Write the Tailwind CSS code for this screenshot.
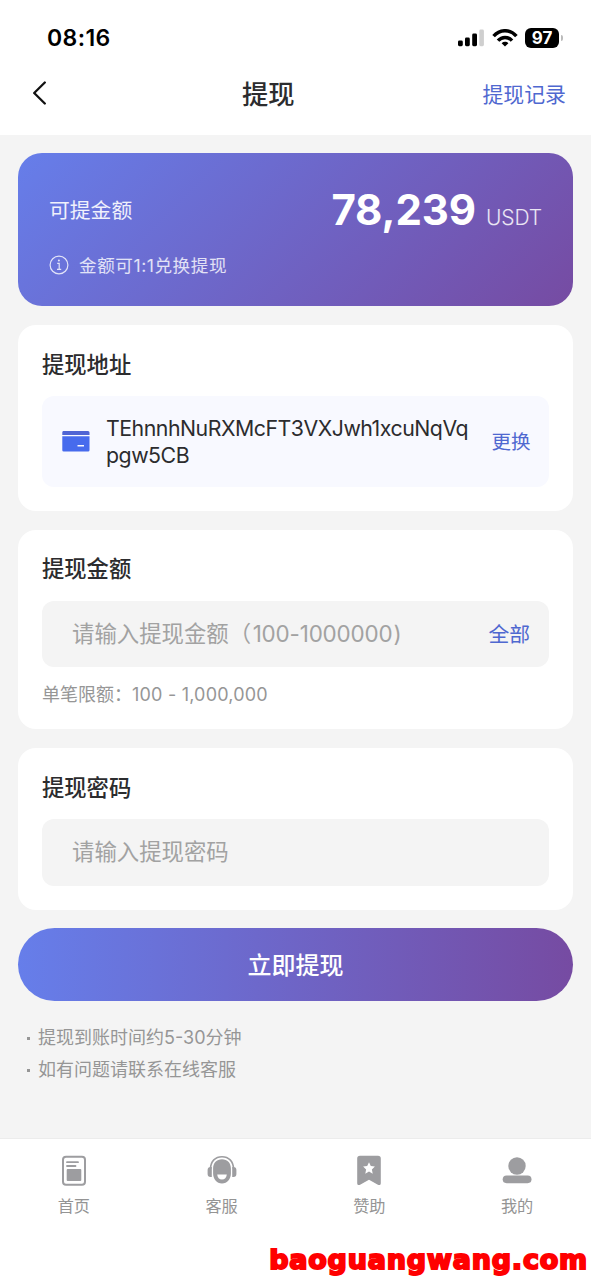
<!DOCTYPE html>
<html lang="zh-CN">
<head>
<meta charset="utf-8">
<meta name="viewport" content="width=device-width, initial-scale=1">
<title>提现</title>
<script src="https://cdn.jsdelivr.net/npm/@tailwindcss/browser@4"></script>
</head>
<body class="relative flex h-[1280px] w-[591px] flex-col overflow-hidden bg-[#f4f4f4] font-['Inter','Noto_Sans_CJK_SC',sans-serif] text-[#2c2c2e] whitespace-nowrap">

<header class="h-[135px] shrink-0 bg-white">
  <div class="flex h-[53px] items-center justify-between pt-[22px] pr-[28px] pl-[47px] text-black">
    <span class="text-[23px] leading-[30px] font-semibold tracking-[0.4px]">08:16</span>
    <div class="flex items-center">
      <svg class="h-[18px] w-[26px]" viewBox="0 0 26 18">
        <rect x="0" y="11.5" width="4.8" height="5.7" rx="1.4"/>
        <rect x="7" y="8.5" width="4.8" height="8.7" rx="1.4"/>
        <rect x="14.2" y="4.5" width="4.8" height="12.7" rx="1.4"/>
        <rect x="21.3" y="0.6" width="4.6" height="16.6" rx="1.4" fill="#cfcfcf"/>
      </svg>
      <svg class="ml-[8px] h-[18px] w-[26px]" viewBox="0 0 26 18" fill="none" stroke="#000" stroke-width="3.5">
        <path d="M1.6 7.2C8-.1 18-.1 24.4 7.2"/>
        <path d="M6 11.6c4-4.3 10-4.3 14 0"/>
        <path d="M9.6 14.2c2-1.9 4.800-1.900 6.800 0L13 17.600z" fill="#000" stroke="none"/>
      </svg>
      <div class="ml-[7px] flex h-[20px] w-[34px] items-center justify-center rounded-[6px] bg-black text-[17px] leading-[20px] font-bold text-white">97</div>
      <div class="ml-[2px] h-[6px] w-[2px] rounded-r-full bg-[#bbb]"></div>
    </div>
  </div>
  <div class="flex h-[82px] items-center justify-between pr-[25px] pl-[32px]">
    <svg class="mt-[-2px] h-[24px] w-[16px]" viewBox="0 0 16 24" fill="none" stroke="#111" stroke-width="2.300" stroke-linecap="round" stroke-linejoin="round"><path d="M12.800 1.500 2.200 12l10.600 10.500"/></svg>
    <h1 class="ml-[6px] pt-[2px] text-[26.300px] leading-[36px] font-medium">提现</h1>
    <a class="pt-[1px] text-[20.900px] leading-[30px] text-[#4f68d0]">提现记录</a>
  </div>
</header>

<main class="flex flex-col px-[18px] pt-[18px]">
  <section class="h-[153px] rounded-[24px] bg-[linear-gradient(135deg,#667eea_0%,#764ba2_100%)] px-[31px] pt-[37px] text-white">
    <div class="flex h-[41px] items-center justify-between">
      <span class="text-[20.800px] text-white/90">可提金额</span>
      <div class="flex items-baseline pt-[2px]">
        <span class="text-[42px] leading-[41px] font-bold tracking-[-0.1px]">78,239</span>
        <span class="ml-[10px] text-[21px] font-light tracking-[-0.1px] text-white/85">USDT</span>
      </div>
    </div>
    <div class="mt-[21px] flex h-[26px] items-center text-[17.600px] text-white/80">
      <svg class="mr-[10px] h-[20px] w-[20px]" viewBox="0 0 20 20" fill="none" stroke="currentColor" stroke-width="1.200"><circle cx="10" cy="10" r="8.900"/><path d="M8.200 8.300H10.200V14M8 14.300h4.200"/><circle cx="9.900" cy="5.600" r="1" fill="currentColor" stroke="none"/></svg>
      <span class="pt-[2px] tracking-[0.550px]">金额可1:1兑换提现</span>
    </div>
  </section>

  <section class="mt-[19px] h-[186px] rounded-[18px] bg-white px-[24px] pt-[25px]">
    <h2 class="text-[22.300px] leading-[30px] font-medium">提现地址</h2>
    <div class="mt-[16px] mr-[0.500px] flex h-[91px] items-center rounded-[12px] bg-[#f8f9ff] pr-[18px] pl-[20px]">
      <svg class="h-[21px] w-[28px] shrink-0" viewBox="0 0 28 21"><path fill="#4f64d4" d="M2 0h24a1.500 1.500 0 0 1 1.500 1.500V4H.3V1.500A1.500 1.500 0 0 1 2 0z"/><path fill="#476bed" fill-rule="evenodd" d="M.3 5.300h27.200v13.900a1.400 1.400 0 0 1-1.400 1.400H1.700A1.400 1.400 0 0 1 .3 19.200zM15.500 14v1.500h6.500V14z"/></svg>
      <p class="ml-[16px] flex-1 pt-px text-[21.300px] leading-[27.500px] tracking-[-0.480px]">TEhnnhNuRXMcFT3VXJwh1xcuNqVq<br>pgw5CB</p>
      <a class="pt-[2px] text-[19.500px] text-[#4f68d0]">更换</a>
    </div>
  </section>

  <section class="mt-[18.500px] h-[199.500px] rounded-[18px] bg-white px-[24px] pt-[24.500px]">
    <h2 class="text-[22.300px] leading-[30px] font-medium">提现金额</h2>
    <div class="mt-[16.500px] mr-[0.500px] flex h-[66px] items-center justify-between rounded-[12px] bg-[#f4f4f4] pr-[18px] pl-[30px]">
      <span class="text-[22.400px] text-[#a2a2a2]">请输入提现金额（<span class="ml-[1.500px] tracking-[-0.150px]">100-1000000</span><span class="ml-px">)</span></span>
      <a class="mr-[0.500px] pt-[2px] text-[20.800px] text-[#4f68d0]">全部</a>
    </div>
    <p class="mt-[14px] text-[18px] leading-[28px] text-[#969696]">单笔限额：<span class="tracking-[0.200px]">100 - 1,000,000</span></p>
  </section>

  <section class="mt-[19px] h-[161.500px] rounded-[18px] bg-white px-[24px] pt-[25px]">
    <h2 class="text-[22.300px] leading-[30px] font-medium">提现密码</h2>
    <div class="mt-[16px] mr-[0.500px] flex h-[66.500px] items-center rounded-[12px] bg-[#f4f4f4] px-[30px]">
      <span class="text-[22.400px] text-[#a2a2a2]">请输入提现密码</span>
    </div>
  </section>

  <button class="mt-[18.500px] h-[73px] rounded-full bg-[linear-gradient(90deg,#667eea_0%,#764ba2_100%)] pt-[2px] text-[24px] font-medium text-white">立即提现</button>

  <ul class="mt-[21px] pl-[9px] text-[18px] leading-[32px] text-[#969696]">
    <li class="flex items-center"><i class="mr-[8px] size-[3px] bg-[#969696]"></i>提现到账时间约5-30分钟</li>
    <li class="flex items-center"><i class="mr-[8px] size-[3px] bg-[#969696]"></i>如有问题请联系在线客服</li>
  </ul>
</main>

<nav class="mt-auto grid h-[142.500px] grid-cols-4 border-t border-[#ececec] bg-white pt-[16px] text-center text-[16.200px] leading-[24px] text-[#949494]">
  <a class="flex flex-col items-center gap-[8px]">
    <svg class="h-[31px] w-[30px]" viewBox="0 0 30 31"><rect x="4" y="1.700" width="22" height="28" rx="3" fill="none" stroke="#9d9da0" stroke-width="2"/><path d="M8 7.200h11M8 11h8.500" stroke="#9d9da0" stroke-width="1.800" stroke-linecap="round"/><rect x="7.700" y="14" width="14.600" height="12" rx="1" fill="#9d9da0"/></svg>
    首页
  </a>
  <a class="flex flex-col items-center gap-[8px]">
    <svg class="h-[31px] w-[30px]" viewBox="0 0 30 31" fill="#9d9da0"><path d="M3.500 14C3.500 6 8.500 1.700 15 1.700S26.500 6 26.500 14" fill="none" stroke="#9d9da0" stroke-width="1.600"/><path d="M4.800 12v10H3.600A3 3 0 0 1 .6 19v-4a3 3 0 0 1 3-3zM25.200 12v10h1.200a3 3 0 0 0 3-3v-4a3 3 0 0 0-3-3z"/><path fill-rule="evenodd" d="M15 4.200c5.300 0 8.900 3.600 8.900 9.300v5c0 5.400-3.600 10-8.900 10s-8.900-4.600-8.900-10v-5c0-5.700 3.600-9.300 8.900-9.300zM10.200 19.600c.2 3 2.100 5 4.800 5s4.600-2 4.800-5z"/></svg>
    客服
  </a>
  <a class="flex flex-col items-center gap-[8px]">
    <svg class="h-[31px] w-[30px]" viewBox="0 0 30 31"><path fill="#9d9da0" d="M6 .7h18a2.800 2.800 0 0 1 2.800 2.800v24.700c0 1.700-1.500 2.400-2.900 1.500L15 24.800l-8.900 4.900c-1.400.9-2.900.2-2.900-1.500V3.500A2.800 2.800 0 0 1 6 .7z"/><path fill="#fff" d="m15 7.200 1.800 3.900 4.100.5-3 2.900.8 4.200-3.700-2.100-3.700 2.100.8-4.200-3-2.900 4.100-.5z"/></svg>
    赞助
  </a>
  <a class="flex flex-col items-center gap-[8px]">
    <svg class="h-[31px] w-[30px]" viewBox="0 0 30 31" fill="#9d9da0"><circle cx="15" cy="11" r="8.700"/><rect x=".7" y="20.500" width="28.800" height="7.700" rx="3.850"/></svg>
    我的
  </a>
</nav>

<div class="absolute right-[3px] bottom-[4px] text-[27px] leading-[32px] font-black tracking-[0.800px] text-[#f00] [-webkit-text-stroke:2px_#f00] font-['DejaVu_Sans',sans-serif]">baoguangwang.com</div>
</body>
</html>
